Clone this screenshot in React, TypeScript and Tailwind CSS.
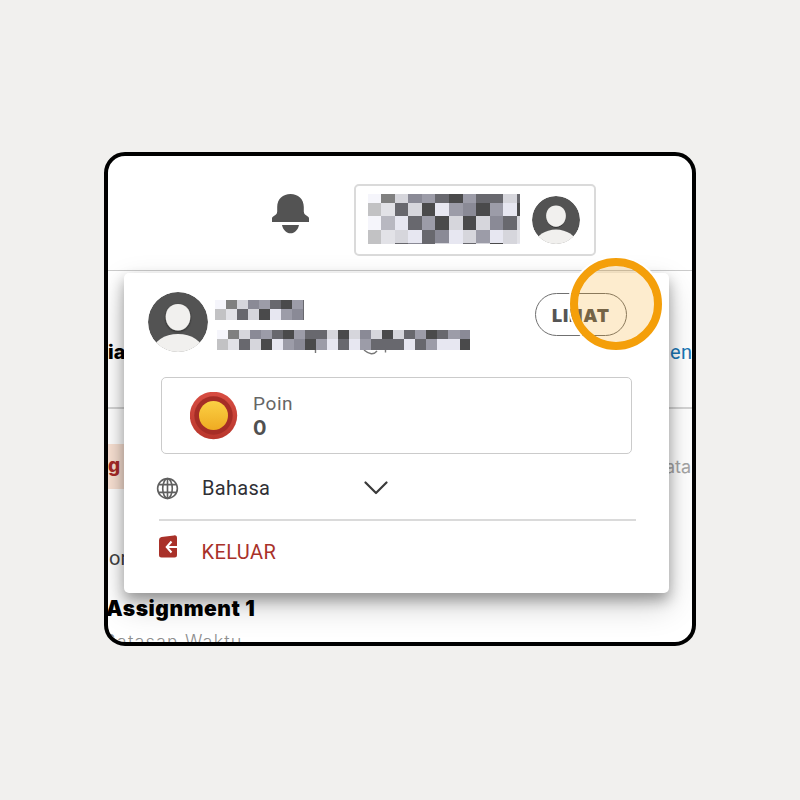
import React from 'react';

const shades: Record<string, string> = {
  w: 'bg-[#f5f5fb]', g: 'bg-[#808080]', d: 'bg-[#d6d6dc]', m: 'bg-[#8a8a96]',
  n: 'bg-[#9c9ca8]', k: 'bg-[#68686e]', b: 'bg-[#4a4a4b]', c: 'bg-[#c2c2c4]',
  e: 'bg-[#e2e2e7]', l: 'bg-[#e7e7f1]', s: 'bg-[#b8b8c1]',
};

function Mosaic({ rows, heights, cell, className }: { rows: string[]; heights: string[]; cell: string; className: string }) {
  return (
    <div className={`overflow-hidden ${className}`}>
      {rows.map((row, i) => (
        <div key={i} className={`flex ${heights[i]}`}>
          {row.split('').map((c, j) => <div key={j} className={`shrink-0 ${cell} ${shades[c]}`} />)}
        </div>
      ))}
    </div>
  );
}

function Avatar({ className }: { className: string }) {
  return (
    <svg viewBox="0 0 60 60" className={className}>
      <defs>
        <clipPath id="avatar-disc"><circle cx="30" cy="30" r="30" /></clipPath>
        <filter id="avatar-shade" x="-20%" y="-20%" width="140%" height="140%">
          <feDropShadow dx="0" dy="1" stdDeviation="0.8" floodOpacity="0.6" />
        </filter>
      </defs>
      <g clipPath="url(#avatar-disc)">
        <circle cx="30" cy="30" r="30" fill="#535353" />
        <ellipse cx="30" cy="59" rx="25" ry="17" fill="#f1f0ee" />
        <path d="M30 12c7.500 0 12.300 5.500 12.300 12.800C42.300 32.500 37 38.500 30 38.500S17.700 32.500 17.700 24.800C17.700 17.500 22.500 12 30 12z" fill="#f1f0ee" filter="url(#avatar-shade)" />
      </g>
    </svg>
  );
}

function Header() {
  return (
    <div className="flex h-[115px] items-start border-b-[1.500px] border-[#cbcbcb] pl-[163px] pt-7">
      <svg viewBox="0 0 40 42" className="mt-[9px] h-[42px] w-10" fill="#535353">
        <path d="M1 29V25.500Q1 24.200 2.200 23.500L5 21.500Q6.200 20.500 6.200 18.500V14C6.200 6 12 1 19.500 1S32.800 6 32.800 14v4.500q0 2 1.200 3l2.800 2Q38 24.200 38 25.500V29z" />
        <path d="M11 32h17c-1 5-4.500 8.300-8.500 8.300S12 37 11 32z" />
      </svg>
      <div className="ml-[43px] flex h-[72px] w-[242px] items-start rounded-[5px] border-2 border-[#dadada] pl-[11.500px] pt-2">
        <Mosaic
          className="w-[152.500px]"
          cell="w-[13.580px]"
          heights={['h-[9px]', 'h-[13px]', 'h-[13.500px]', 'h-[13px]', 'h-[1.500px]']}
          rows={['wgdmnkbnkkdk', 'cekdblnmbnlb', 'wslknbdbdmkd', 'cedlkmldnlde', 'cekmkdlkdbdl']}
        />
        <Avatar className="ml-3 mt-0.5 h-12 w-12" />
      </div>
    </div>
  );
}

function Page() {
  return (
    <div className="text-[20px]">
      <Header />
      <div className="flex h-[138px] items-start justify-between border-b-2 border-[#d4d4d4] pt-[66px] leading-[30px]">
        <span className="font-['Inter',sans-serif] font-extrabold text-black">ia</span>
        <span className="w-[22px] whitespace-nowrap font-['Roboto',sans-serif] tracking-[0.5px] text-[#1976b5]">en</span>
      </div>
      <div className="mt-[35px] flex h-[45px] items-center justify-between">
        <span className="flex h-full w-10 items-center bg-[#f9e1d3] font-['Inter',sans-serif] text-[19px] font-extrabold text-[#a72b28]">g</span>
        <span className="w-[27px] font-['Inter',sans-serif] text-[18px] text-[#a5a5a5]">ata</span>
      </div>
      <div className="mt-[54px] h-[30px] pl-px font-['Roboto',sans-serif] leading-[30px] text-[#424242]">on</div>
      <div className="-ml-0.5 mt-[21px] h-[30px] font-['Inter',sans-serif] text-[21px] font-black leading-[30px] tracking-[0.55px] text-black">Assignment 1</div>
      <div className="-ml-1 mt-[3px] h-[30px] font-['Inter',sans-serif] text-[18px] font-light leading-[30px] tracking-[1.150px] text-[#8f8f8f]">Batasan Waktu</div>
    </div>
  );
}

function LogoutIcon() {
  return (
    <svg viewBox="0 0 20 24" className="h-6 w-5">
      <path d="M1 5Q1 2.400 3.500 2L16 .4Q19 0 19 3v17q0 2.500-2.500 2.500h-13Q1 22.500 1 20z" fill="#a93129" />
      <path d="M13.500 6.500 8.700 12l4.800 5.500M9 12h11" fill="none" stroke="#fff" strokeWidth="2" />
    </svg>
  );
}

function AccountMenu() {
  return (
    <div className="absolute left-4 top-[117px] h-[320px] w-[545px] rounded-[5px] bg-white shadow-[0_7px_14px_rgba(0,0,0,0.32),0_13px_32px_rgba(0,0,0,0.19)]">
      <div className="flex h-[104px] items-start pl-6 pt-[19px]">
        <Avatar className="h-[60px] w-[60px] shrink-0" />
        <div className="ml-[6.500px] w-[256px] shrink-0 pt-2">
          <Mosaic className="w-[89.500px]" cell="w-[11.050px]" heights={['h-[9px]', 'h-[11px]']} rows={['wgdmnkbnk', 'cekdblnmk']} />
          <Mosaic className="ml-0.5 mt-2.5 w-[253.500px]" cell="w-[11.050px]" heights={['h-[9px]', 'h-[11px]']} rows={['wgdmnkbnkkdbdmdbdknbknm', 'cekdblnmbnlklnkkklknllb']} />
          <svg viewBox="0 0 256 6" className="h-1.5 w-64" fill="none" stroke="#777" strokeWidth="1.400">
            <path d="M100.500 0v3M170.500 0v2.500M149 0q8 7 13 1" />
          </svg>
        </div>
        <div className="ml-[64.500px] mt-px flex h-[43px] w-[92px] shrink-0 items-center justify-center rounded-full border-[1.500px] border-[#707070] pt-0.5 font-['Inter',sans-serif] text-[18px] font-black tracking-[0.800px] text-[#555]">LIHAT</div>
      </div>
      <div className="ml-[37px] flex h-[77px] w-[471px] items-center rounded-[5px] border-[1.500px] border-[#cbcbcb] pl-7">
        <svg viewBox="0 0 48 48" className="h-12 w-12">
          <defs>
            <linearGradient id="medal-rim" x2="0" y2="1"><stop stopColor="#d84d42" /><stop offset="1" stopColor="#b9372d" /></linearGradient>
            <linearGradient id="medal-core" x2="0" y2="1"><stop stopColor="#fbd044" /><stop offset="1" stopColor="#efab22" /></linearGradient>
          </defs>
          <circle cx="23.500" cy="23.500" r="23.700" fill="url(#medal-rim)" />
          <circle cx="23.500" cy="23.500" r="19.200" fill="#a62d26" />
          <circle cx="23.500" cy="23.500" r="14.500" fill="url(#medal-core)" />
        </svg>
        <div className="ml-[15px] pt-px font-['Roboto',sans-serif] text-[19px] leading-[25px] text-[#666]">
          <div className="tracking-[0.6px]">Poin</div>
          <div className="font-['Inter',sans-serif] text-[20px] font-bold text-[#505050]">0</div>
        </div>
      </div>
      <div className="ml-8 mt-[19px] flex h-[30px] items-center font-['Roboto',sans-serif] text-[20px] text-[#303035]">
        <svg viewBox="0 0 24 24" className="h-[23px] w-[23px]" fill="none" stroke="#606060" strokeWidth="1.700">
          <circle cx="12" cy="12" r="10.300" /><ellipse cx="12" cy="12" rx="5" ry="10.300" />
          <path d="M12 1.700v20.600M2.700 8h18.600M2.700 16h18.600" />
        </svg>
        <span className="ml-[23px] w-[162px] tracking-[0.3px]">Bahasa</span>
        <svg viewBox="0 0 24 14" className="h-3.5 w-6" fill="none" stroke="#3a3a3a" strokeWidth="2.200" strokeLinecap="round" strokeLinejoin="round"><path d="m1.500 1.500 10.500 10.500L22.500 1.500" /></svg>
      </div>
      <div className="ml-[35px] mt-4 h-[1.500px] w-[477px] bg-[#dadada]" />
      <div className="ml-[34px] mt-[14px] flex items-start font-['Roboto',sans-serif] text-[20px] leading-[34px] text-[#a93129]">
        <LogoutIcon />
        <span className="ml-[23.500px] tracking-[0.4px]">KELUAR</span>
      </div>
    </div>
  );
}

export default function App() {
  return (
    <div className="h-[800px] w-[800px] bg-[#f1f0ee] pl-[104px] pt-[152px]">
      <div className="relative h-[494px] w-[592px] overflow-hidden rounded-[21px] border-4 border-black bg-white">
        <Page />
        <AccountMenu />
        <div className="absolute left-[462px] top-[102px] h-[92px] w-[92px] rounded-full border-8 border-[#f49f0a] bg-[#f49f0a]/20 bg-clip-padding shadow-[0_0_0_2px_white]" />
      </div>
    </div>
  );
}
